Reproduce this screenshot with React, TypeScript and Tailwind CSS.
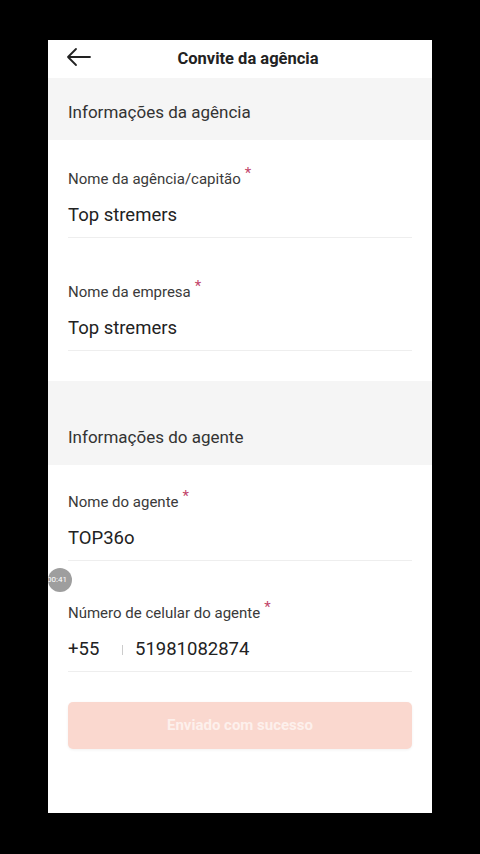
import React from "react";

type Field = { label: string; value: string; prefix?: string; top: string };

const agencyFields: Field[] = [
  { label: "Nome da agência/capitão", value: "Top stremers", top: "pt-[29px]" },
  { label: "Nome da empresa", value: "Top stremers", top: "pt-[44px]" },
];

const agentFields: Field[] = [
  { label: "Nome do agente", value: "TOP36o", top: "pt-[27px]" },
  {
    label: "Número de celular do agente",
    value: "51981082874",
    prefix: "+55",
    top: "pt-[42px]",
  },
];

const FormField = ({ field }: { field: Field }) => (
  <div className={field.top}>
    <div className="flex items-start text-[15px] leading-[20px] text-[#3a3a3a]">
      <span>{field.label}</span>
      <span className="ml-[4px] text-[#c2456a] text-[15px] leading-[14px] -mt-[3px]">*</span>
    </div>
    <div className="flex items-center h-[40px] mt-[7px] text-[18.5px] text-[#222]">
      {field.prefix && (
        <>
          <span className="w-[48px]">{field.prefix}</span>
          <span className="w-[1px] h-[10px] bg-[#ccc] mr-[12px] ml-[6px]" />
        </>
      )}
      <span>{field.value}</span>
    </div>
    <div className="h-[1px] bg-[#eeeeee] mt-[1px]" />
  </div>
);

const App = () => {
  return (
    <div
      className="w-[480px] h-[854px] bg-black pt-[40px] px-[48px]"
      style={{ fontFamily: "Roboto, 'Noto Sans', sans-serif" }}
    >
      <div className="relative h-[773px] bg-white overflow-hidden">
        {/* Header */}
        <div className="relative flex items-center justify-center h-[38px] pl-[16px]">
          <svg
            className="absolute left-[18px] top-[7px]"
            width="26"
            height="20"
            viewBox="0 0 26 20"
            fill="none"
            stroke="#222"
            strokeWidth="1.8"
            strokeLinecap="round"
            strokeLinejoin="round"
          >
            <path d="M24 10H2M10 2L2 10L10 18" />
          </svg>
          <h1 className="text-[16.5px] font-bold text-[#222]">Convite da agência</h1>
        </div>

        {/* Agency section */}
        <div className="flex items-end h-[62px] bg-[#f5f5f5] px-[20px] pb-[18px] text-[17px] leading-[20px] text-[#333]">
          Informações da agência
        </div>
        <div className="px-[20px] pb-[30px]">
          {agencyFields.map((f, i) => (
            <FormField key={i} field={f} />
          ))}
        </div>

        {/* Agent section */}
        <div className="flex items-end h-[84px] bg-[#f5f5f5] px-[20px] pb-[18px] text-[17px] leading-[20px] text-[#333]">
          Informações do agente
        </div>
        <div className="px-[20px]">
          {agentFields.map((f, i) => (
            <FormField key={i} field={f} />
          ))}

          <button className="w-full h-[47px] mt-[30px] rounded-[5px] bg-[#fad8cf] shadow-[0_1px_3px_rgba(0,0,0,0.06)] text-[15px] font-bold text-[#fdf0ec]">
            Enviado com sucesso
          </button>
        </div>

        {/* recording timer bubble */}
        <div className="absolute left-[0px] top-[528px] w-[24px] h-[24px] rounded-full bg-[#9e9e9e] overflow-hidden flex items-center justify-center">
          <span className="text-[8px] text-white -ml-[6px]">00:41</span>
        </div>
      </div>
    </div>
  );
};

export default App;
